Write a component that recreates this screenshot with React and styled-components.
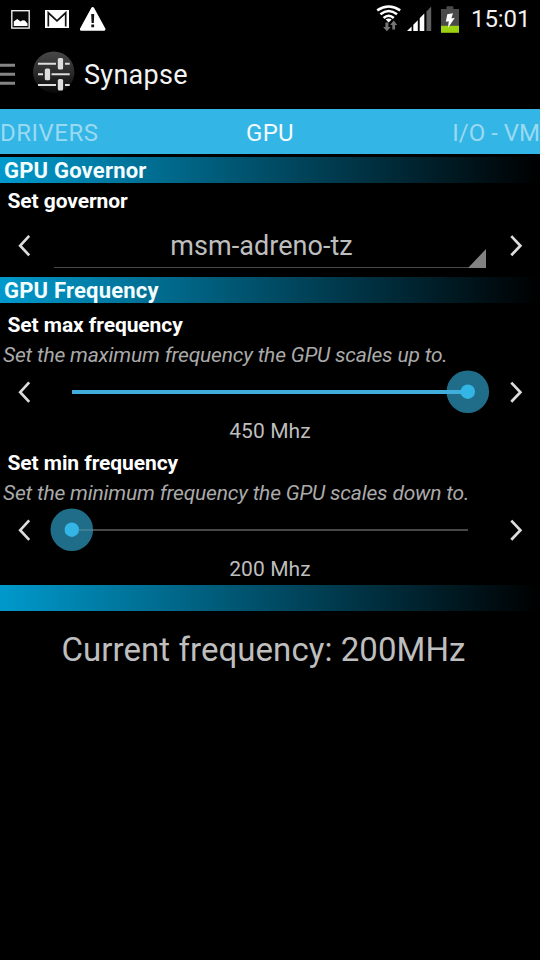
import React from "react";
import styled, { createGlobalStyle } from "styled-components";

const Global = createGlobalStyle`
  html, body { margin: 0; background: #000; }
  body { font-family: Roboto, "Noto Sans", sans-serif; overflow: hidden; }
`;

const Screen = styled.main`
  width: 540px;
  height: 960px;
  overflow: hidden;
  background: #000;
  color: #bebebe;
  display: flex;
  flex-direction: column;
  white-space: nowrap;
`;

const StatusBar = styled.header`
  height: 37px;
  flex: none;
  display: flex;
  justify-content: space-between;
`;

const Icons = styled.svg`
  display: block;
  flex: none;
`;

const StatusRight = styled.div`
  display: flex;
`;

const Clock = styled.time`
  width: 69px;
  font-size: 24px;
  line-height: 38px;
  letter-spacing: -0.1px;
  color: #f2f2f2;
`;

const ActionBar = styled.div`
  height: 72px;
  flex: none;
  display: flex;
  align-items: flex-start;
`;

const AppTitle = styled.h1`
  margin: 0 0 0 5px;
  font-size: 27px;
  font-weight: 400;
  line-height: 76px;
  letter-spacing: 0.3px;
  color: #f3f3f3;
`;

const Tabs = styled.nav`
  height: 45px;
  flex: none;
  margin-bottom: 3px;
  background: #33b5e5;
  display: grid;
  grid-template-columns: 1fr auto 1fr;
  line-height: 48px;
  font-size: 24px;
`;

const Tab = styled.span`
  color: ${(p) => (p.$active ? "#f2fbfe" : "#99daf2")};
  text-align: ${(p) => p.$align || "left"};
  letter-spacing: ${(p) => p.$track || 0}px;
`;

const Section = styled.h2`
  box-sizing: border-box;
  height: 26px;
  flex: none;
  margin: ${(p) => p.$top || 0}px 0 0;
  padding-left: 4px;
  background: linear-gradient(90deg, #0099cc, #000);
  color: #f4feff;
  font-size: 22px;
  font-weight: 700;
  line-height: 27px;
  letter-spacing: 0.2px;
`;

const Label = styled.h3`
  height: 30px;
  flex: none;
  margin: ${(p) => p.$top || 0}px 0 0;
  padding-left: 7.5px;
  color: #fff;
  font-size: 21px;
  font-weight: 700;
  line-height: 30px;
  letter-spacing: -0.08px;
`;

const Description = styled.p`
  height: 29px;
  flex: none;
  margin: 0;
  padding-left: 3px;
  color: #aaa;
  font-size: 21px;
  font-style: italic;
  line-height: 31px;
  letter-spacing: -0.19px;
`;

const ControlRow = styled.div`
  height: ${(p) => p.$h}px;
  flex: none;
  display: grid;
  grid-template-columns: 50px 1fr 50px;
`;

const StepButton = styled.button`
  padding: 0;
  border: 0;
  background: none;
  display: block;
  align-self: start;
`;

const Spinner = styled.div`
  height: 52px;
  margin: 0 4px;
  border-bottom: 1px solid #494949;
  position: relative;
  color: #bebebe;
  font-size: 27px;
  line-height: 60px;
  text-align: center;
  padding-right: 17px;
  box-sizing: border-box;
  letter-spacing: 0.06px;
`;

const Corner = styled.svg`
  position: absolute;
  right: 0;
  bottom: -1px;
`;

const SliderSvg = styled.svg`
  display: block;
`;

const Value = styled.div`
  height: 31px;
  flex: none;
  color: #bebebe;
  font-size: 21px;
  line-height: 32px;
  text-align: center;
  letter-spacing: 0.1px;
`;

const Current = styled.div`
  height: 77px;
  flex: none;
  color: #bebebe;
  font-size: 33px;
  line-height: 77px;
  text-align: center;
  padding-right: 13px;
  letter-spacing: 0.06px;
`;

function Step({ next, label, h }) {
  return (
    <StepButton aria-label={label}>
      <Icons width="50" height={h} viewBox={`0 ${-h / 2} 50 ${h}`}>
        <path
          d={next ? "M21.3 -9.4 L30.4 0.2 L21.3 9.8" : "M29.2 -9.6 L20.2 0.2 L29.2 9.8"}
          fill="none"
          stroke="#dcdcdc"
          strokeWidth="2.7"
        />
      </Icons>
    </StepButton>
  );
}

function Slider({ ratio }) {
  const x = 22 + ratio * 396;
  return (
    <ControlRow $h={46}>
      <Step label="Decrease" h={46} />
      <SliderSvg width="440" height="46" viewBox="0 0 440 46">
        <rect x="22" y="22" width="396" height="2" fill="#484848" />
        <circle cx={x - 0.2} cy="22.7" r="21.3" fill="#33b5e5" fillOpacity="0.6" />
        <rect x="22" y="21" width={x - 22} height="4" fill="#41addb" />
        {ratio === 0 && <rect x="22" y="22" width="21" height="2" fill="#3f7e93" />}
        <circle cx={x - 0.2} cy="22.7" r="7.2" fill="#33b5e5" />
      </SliderSvg>
      <Step next label="Increase" h={46} />
    </ControlRow>
  );
}

function NotificationIcons() {
  return (
    <Icons width="120" height="37" viewBox="0 0 120 37">
      <rect x="11.8" y="10.7" width="17.4" height="17.4" fill="#080808" stroke="#eee" strokeWidth="1.4" />
      <path d="M13.8 26v-4.6l3.4-2.4 3.4 2.5 2-1.2 2.2.2 2.7 3V26z" fill="#fff" />
      <rect x="45" y="10" width="24" height="18" fill="#fff" />
      <path d="M48.3 26.5V12.8L57 20.8l8.7-8v13.7" fill="none" stroke="#111" strokeWidth="1.7" />
      <path d="M92.7 8.5L104 29.3H81.4z" fill="#fff" stroke="#fff" strokeWidth="3" strokeLinejoin="round" />
      <path d="M91.2 14h3l-.4 9h-2.2zM91.3 24.5h2.8v2.7h-2.8z" fill="#111" />
    </Icons>
  );
}

function SystemIcons() {
  return (
    <Icons width="97" height="37" viewBox="374 0 97 37">
      <g fill="none" stroke="#fff" strokeWidth="2.5">
        <path d="M377.2 10.4Q388.7 2.6 400.2 10.4" />
        <path d="M380.4 14.3Q388.7 7.8 397 14.3" />
        <path d="M383.6 18Q388.7 13.4 393.8 18" />
      </g>
      <path d="M385.7 19.6Q388.7 17.2 391.7 19.6L388.7 22.6z" fill="#fff" />
      <g fill="#747474">
        <path d="M385.4 22.5h3v4.5h2.3l-3.8 4.3-3.8-4.3h2.3z" />
        <path d="M392.3 29.4h2.8v-4.3h2.2l-3.6-4.5-3.6 4.5h2.2z" />
      </g>
      <path d="M407 31h4.6v-4.4zM413.3 31h4.5V20.3l-4.5 4.5zM419.7 31h4.6V13.5l-4.6 4.7z" fill="#fff" />
      <path d="M426.5 31h4.7V6.6l-4.7 4.8z" fill="#606060" />
      <path d="M446.5 6.2h6.8V9H459v17h-18V9h5.5z" fill="#4a4a4a" />
      <rect x="441" y="25.8" width="18" height="7" fill="#9bd211" />
      <path d="M447.3 14.2l5.7-1-1.6 5 3.3-.3-6.8 10 .9-6.7-3 .6z" fill="#fff" />
    </Icons>
  );
}

function AppIcon() {
  return (
    <Icons width="79" height="72" viewBox="0 37 79 72">
      <defs>
        <linearGradient id="disc" x1="0" y1="0" x2="0" y2="1">
          <stop offset="0" stopColor="#484848" />
          <stop offset="0.5" stopColor="#2b2b2b" />
          <stop offset="1" stopColor="#080808" />
        </linearGradient>
      </defs>
      <path d="M0 65.3h15M0 74.3h15M0 83.3h15" stroke="#858585" strokeWidth="3" />
      <circle cx="53.7" cy="72.2" r="20.7" fill="url(#disc)" />
      <path d="M38 63.7h18M65 63.7h4.7M38 74.2h5M51.5 74.2h18.2M38 85h18M65 85h4.7" stroke="#ddd" strokeWidth="2" />
      <g fill="#ddd">
        <rect x="57.8" y="58" width="5.3" height="11.6" rx="1.5" />
        <rect x="44.8" y="68.6" width="5.3" height="11.6" rx="1.5" />
        <rect x="57.8" y="79" width="5.3" height="11.6" rx="1.5" />
      </g>
    </Icons>
  );
}

export default function App() {
  return (
    <Screen>
      <Global />
      <StatusBar>
        <NotificationIcons />
        <StatusRight>
          <SystemIcons />
          <Clock>15:01</Clock>
        </StatusRight>
      </StatusBar>
      <ActionBar>
        <AppIcon />
        <AppTitle>Synapse</AppTitle>
      </ActionBar>
      <Tabs>
        <Tab $track={0.5}>DRIVERS</Tab>
        <Tab $active $track={0.3}>GPU</Tab>
        <Tab $align="right">I/O - VM</Tab>
      </Tabs>

      <Section>GPU Governor</Section>
      <Label $top={3}>Set governor</Label>
      <ControlRow $h={61}>
        <Step label="Previous governor" h={59} />
        <Spinner>
          msm-adreno-tz
          <Corner width="18" height="19" viewBox="0 0 18 19">
            <path d="M18 0v19H0z" fill="#828282" />
          </Corner>
        </Spinner>
        <Step next label="Next governor" h={59} />
      </ControlRow>

      <Section>GPU Frequency</Section>
      <Label $top={7}>Set max frequency</Label>
      <Description>Set the maximum frequency the GPU scales up to.</Description>
      <Slider ratio={1} />
      <Value>450 Mhz</Value>
      <Label $top={2}>Set min frequency</Label>
      <Description>Set the minimum frequency the GPU scales down to.</Description>
      <Slider ratio={0} />
      <Value>200 Mhz</Value>

      <Section $top={1} />
      <Current>Current frequency: 200MHz</Current>
    </Screen>
  );
}
